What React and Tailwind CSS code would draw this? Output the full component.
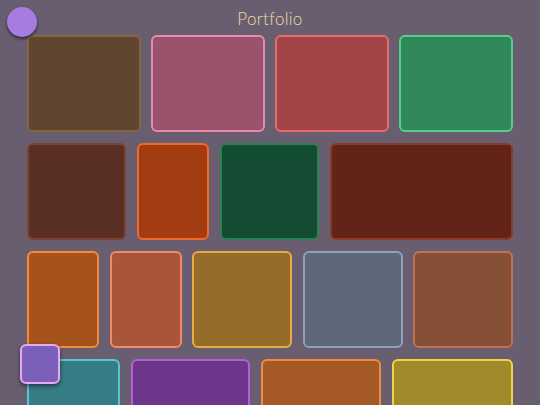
import React from "react";

const rows = [
  {
    gap: "gap-[10px]",
    tiles: [
      { w: "w-[114px]", cls: "bg-[#5f4631] border-[#8b623f]" },
      { w: "w-[114px]", cls: "bg-[#99536c] border-[#ea8bad]" },
      { w: "w-[114px]", cls: "bg-[#a04445] border-[#e86c6f]" },
      { w: "w-[114px]", cls: "bg-[#308759] border-[#58cd88]" },
    ],
  },
  {
    gap: "gap-[11px]",
    tiles: [
      { w: "w-[99px]", cls: "bg-[#5a3025] border-[#7c4232]" },
      { w: "w-[72px]", cls: "bg-[#a43c11] border-[#f26a2b]" },
      { w: "w-[99px]", cls: "bg-[#144c33] border-[#2b7f51]" },
      { w: "w-[183px]", cls: "bg-[#622418] border-[#8c3a28]" },
    ],
  },
  {
    gap: "gap-[10.5px]",
    tiles: [
      { w: "w-[72px]", cls: "bg-[#a5531b] border-[#f28b3b]" },
      { w: "w-[72px]", cls: "bg-[#a8553b] border-[#f2896b]" },
      { w: "w-[100px]", cls: "bg-[#966c29] border-[#e9ab45]" },
      { w: "w-[100px]", cls: "bg-[#5f6878] border-[#90a1bc]" },
      { w: "w-[100px]", cls: "bg-[#855035] border-[#c27152]" },
    ],
  },
  {
    gap: "gap-[11px]",
    tiles: [
      { w: "w-[93px]", cls: "bg-[#367c85] border-[#56c7d1]" },
      { w: "w-[119px]", cls: "bg-[#6e358b] border-[#b262d2]" },
      { w: "w-[120px]", cls: "bg-[#a55a25] border-[#f28b41]" },
      { w: "w-[121px]", cls: "bg-[#a08a2b] border-[#f2d242]" },
    ],
  },
];

export default function App() {
  return (
    <div className="relative w-[540px] h-[405px] overflow-hidden bg-[#685e6f]" style={{ fontFamily: "Lato, 'Open Sans', sans-serif" }}>
      {/* header */}
      <div className="h-[35px] flex items-center justify-center pt-[3px]">
        <span className="text-[17px] font-light text-[#e9dea4] tracking-[0.3px]">Portfolio</span>
      </div>

      {/* tiles */}
      <div className="pl-[27px] flex flex-col gap-[11px]">
        {rows.map((row, i) => (
          <div key={i} className={`flex h-[97px] ${row.gap}`}>
            {row.tiles.map((t, j) => (
              <div key={j} className={`${t.w} shrink-0 rounded-[6px] border-[2.5px] ${t.cls}`} />
            ))}
          </div>
        ))}
      </div>

      {/* floating avatar */}
      <div className="absolute left-[7px] top-[7px] w-[30px] h-[30px] rounded-full bg-[#a47ddf] shadow-[0_2px_3px_rgba(30,15,40,0.7)]" />

      {/* floating square */}
      <div className="absolute left-[20px] top-[344px] w-[40px] h-[40px] rounded-[6px] border-[2.5px] border-[#e9a9f2] bg-[#7b5fb9] shadow-[0_2px_4px_rgba(20,10,30,0.6)]" />
    </div>
  );
}
